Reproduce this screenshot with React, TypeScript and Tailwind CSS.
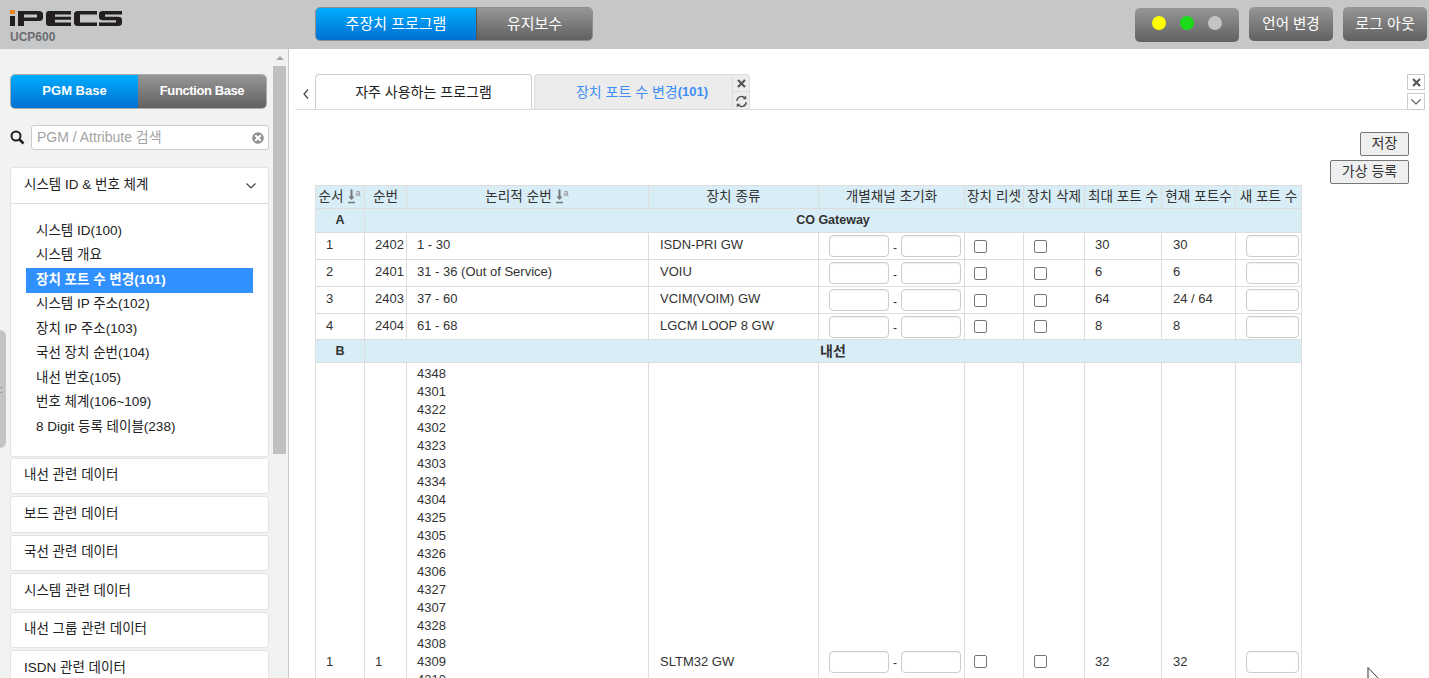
const FONT = "font-['Liberation_Sans','Noto_Sans_CJK_KR',sans-serif]";

const menuItems = [
  "시스템 ID(100)",
  "시스템 개요",
  "장치 포트 수 변경(101)",
  "시스템 IP 주소(102)",
  "장치 IP 주소(103)",
  "국선 장치 순번(104)",
  "내선 번호(105)",
  "번호 체계(106~109)",
  "8 Digit 등록 테이블(238)",
];

const groups = [
  { label: "내선 관련 데이터", h: "h-[36px]" },
  { label: "보드 관련 데이터", h: "h-[37px]" },
  { label: "국선 관련 데이터", h: "h-[36px]" },
  { label: "시스템 관련 데이터", h: "h-[37px]" },
  { label: "내선 그룹 관련 데이터", h: "h-[36px]" },
  { label: "ISDN 관련 데이터", h: "h-[37px]" },
];

const gatewayRows = [
  { no: "1", seq: "2402", logical: "1 - 30", type: "ISDN-PRI GW", max: "30", cur: "30", h: "h-[27px]" },
  { no: "2", seq: "2401", logical: "31 - 36 (Out of Service)", type: "VOIU", max: "6", cur: "6", h: "h-[27px]" },
  { no: "3", seq: "2403", logical: "37 - 60", type: "VCIM(VOIM) GW", max: "64", cur: "24 / 64", h: "h-[27px]" },
  { no: "4", seq: "2404", logical: "61 - 68", type: "LGCM LOOP 8 GW", max: "8", cur: "8", h: "h-[26px]" },
];

const extensions = [
  "4348", "4301", "4322", "4302", "4323", "4303", "4334", "4304", "4325",
  "4305", "4326", "4306", "4327", "4307", "4328", "4308", "4309", "4310",
];

const td = "border border-[#dddddd] p-0 text-[13px] text-[#333333] align-middle";
const th = "border border-[#dddddd] p-0 text-[13.6px] font-normal text-[#333333] bg-[#d9edf7] text-center whitespace-nowrap";
const groupTh = "border border-[#dddddd] p-0 text-[12.5px] font-bold text-[#333333] bg-[#d9edf7] text-center";
const inputBox = "h-[22px] rounded-[4px] border border-[#cccccc] bg-white shadow-[inset_0_1px_1px_rgba(0,0,0,0.05)] box-border";
const gradBlue = "bg-gradient-to-b from-[#00adff] to-[#0070d0]";
const gradGray = "bg-gradient-to-b from-[#979797] to-[#616161]";

function SortIcon() {
  return (
    <svg width="14" height="15" viewBox="0 0 14 15" className="inline-block ml-[4px] align-[-3px]">
      <path d="M3.500 0.500v9" stroke="#777" strokeWidth="2" />
      <path d="M0.500 7.500l3 3.500 3-3.500z" fill="#777" />
      <path d="M0 13.500h7" stroke="#777" strokeWidth="1.500" />
      <text x="7.500" y="6.500" fontSize="9" fill="#888" fontFamily="Liberation Sans">a</text>
    </svg>
  );
}

function ChannelInputs() {
  return (
    <div className="flex items-center justify-start pl-[10px] gap-[4px]">
      <span className={`${inputBox} w-[60px]`} />
      <span className="text-[12px] leading-none pt-[3px]">-</span>
      <span className={`${inputBox} w-[60px]`} />
    </div>
  );
}

function Check({ inset }: { inset: string }) {
  return (
    <div className={`flex ${inset}`}>
      <span className="w-[13px] h-[13px] rounded-[2px] border border-[#767676] bg-white box-border" />
    </div>
  );
}

function Logo() {
  return (
    <svg width="112" height="17" viewBox="0 0 112 17" className="block">
      <rect x="0" y="0" width="5" height="4" fill="#f58220" />
      <rect x="0" y="6" width="5" height="10" fill="#231f20" />
      <path d="M8 1h21q4 0 4 3.500v3q0 3.500-4 3.500H14v5H8zM14 4.500v3h13v-3z" fill="#231f20" fillRule="evenodd" />
      <path d="M39 1h22v3.500H45v2.300h16v3H45v2.700h16V16H39q-3 0-3-3V4q0-3 3-3z" fill="#231f20" />
      <path d="M68 1h19v3.500H70v8h17V16H68q-4 0-4-3.500v-8Q64 1 68 1z" fill="#231f20" />
      <path d="M93 1h19v3.500H95v2.200h13q4 0 4 3.300v2.700q0 3.300-4 3.300H89v-3.500h17v-2.300H93q-4 0-4-3.200V4.200Q89 1 93 1z" fill="#231f20" />
    </svg>
  );
}

function Sidebar() {
  return (
    <aside className="relative w-[289px] shrink-0 h-full bg-[#f1f2f2] border-r border-[#c8c8c8] flex overflow-hidden">
      <div className="w-[273px] shrink-0 pl-[10px] pr-[4px] pt-[25px]">
        <div className="flex w-[257px] h-[35px] rounded-[5px] overflow-hidden border border-[#666666]/50 text-white text-[13px] font-bold">
          <div className={`w-[127px] flex items-center justify-center pb-[1px] ${gradBlue}`}>PGM Base</div>
          <div className={`flex-1 flex items-center justify-center pb-[1px] tracking-[-0.4px] ${gradGray}`}>Function Base</div>
        </div>
        <div className="flex items-center mt-[16px] h-[25px]">
          <svg width="15" height="15" viewBox="0 0 15 15" className="shrink-0">
            <circle cx="6" cy="6" r="4.500" fill="none" stroke="#222" strokeWidth="2" />
            <path d="M9.500 9.500L13.500 13.500" stroke="#222" strokeWidth="2.500" />
          </svg>
          <div className="ml-[6px] flex-1 h-[25px] rounded-[3px] border border-[#cccccc] bg-white flex items-center pl-[5px] pr-[4px] text-[14px] text-[#a3a3a3]">
            <span className="flex-1">PGM / Attribute 검색</span>
            <svg width="12" height="12" viewBox="0 0 12 12">
              <circle cx="6" cy="6" r="5.800" fill="#8f8f8f" />
              <path d="M3.200 3.200l5.600 5.600M8.800 3.200l-5.600 5.600" stroke="#fff" strokeWidth="2" />
            </svg>
          </div>
        </div>
        <div className="mt-[17px] rounded-[3px] border border-[#e3e3e3] bg-white">
          <div className="h-[36px] flex items-center justify-between pl-[13px] pr-[12px] border-b border-[#dddddd] text-[13.500px] text-[#222222]">
            <span>시스템 ID &amp; 번호 체계</span>
            <svg width="10" height="6" viewBox="0 0 10 6">
              <path d="M0.500 0.500L5 5l4.500-4.500" fill="none" stroke="#444" strokeWidth="1.200" />
            </svg>
          </div>
          <ul className="pt-[15px] pb-[16px] px-[15px]">
            {menuItems.map((m, i) => (
              <li
                key={m}
                className={
                  i === 2
                    ? "h-[24.500px] flex items-center pl-[10px] bg-[#3090ff] text-white font-bold text-[13.500px]"
                    : "h-[24.500px] flex items-center pl-[10px] pb-[1px] text-[#222222] text-[13.500px]"
                }
              >
                {m}
              </li>
            ))}
          </ul>
        </div>
        <div className="mt-[1px] flex flex-col gap-[2px]">
          {groups.map((g) => (
            <div
              key={g.label}
              className={`${g.h} shrink-0 flex items-center pl-[13px] rounded-[3px] border border-[#e3e3e3] bg-white text-[13.500px] text-[#222222]`}
            >
              {g.label}
            </div>
          ))}
        </div>
      </div>
      {/* scrollbar */}
      <div className="w-[13px] shrink-0 flex flex-col items-center">
        <div className="h-[17px] flex items-center justify-center">
          <svg width="8" height="4" viewBox="0 0 8 4">
            <path d="M0 4l4-4 4 4z" fill="#a3a3a3" />
          </svg>
        </div>
        <div className="w-[13px] h-[388px] bg-[#c0c0c0]" />
      </div>
      {/* collapse handle */}
      <div className="absolute left-0 top-[281px] w-[6px] h-[118px] rounded-r-[6px] bg-[#c4c4c4]" />
      <span className="absolute left-0 top-[336px] text-[#666666] text-[10px] leading-none">:</span>
    </aside>
  );
}

function Tabs() {
  return (
    <div className="relative h-[61px] pt-[25px] mx-[6px] border-b border-[#dcdcdc] flex items-stretch">
      <div className="w-[20px] flex items-center justify-center pt-[4px] pl-[2px]">
        <svg width="6" height="10" viewBox="0 0 6 10">
          <path d="M5 0.500L1 5l4 4.500" fill="none" stroke="#444" strokeWidth="1.200" />
        </svg>
      </div>
      <div className="w-[217px] rounded-t-[4px] border border-b-0 border-[#cccccc] bg-white flex items-center justify-center text-[14px] text-[#222222]">
        자주 사용하는 프로그램
      </div>
      <div className="ml-[2px] w-[216px] flex rounded-t-[4px] border border-b-0 border-[#dddddd] bg-[#ececec]">
        <div className="flex-1 flex items-center justify-center pl-[17px] text-[13px] font-bold text-[#3e8ef7]">
          <span className="font-normal text-[14px]">장치 포트 수 변경</span>(101)
        </div>
        <div className="w-[17px] flex flex-col border-l border-[#dddddd]">
          <div className="h-[17px] flex items-center justify-center border-b border-[#dddddd]">
            <svg width="9" height="9" viewBox="0 0 9 9">
              <path d="M1 1l7 7M8 1l-7 7" stroke="#555" strokeWidth="2.200" />
            </svg>
          </div>
          <div className="flex-1 flex items-center justify-center pt-[1px]">
            <svg width="13" height="13" viewBox="0 0 11 11" fill="none" stroke="#555" strokeWidth="1.200">
              <path d="M1.500 5A4 4 0 0 1 8.800 3" />
              <path d="M9.500 6A4 4 0 0 1 2.200 8" />
              <path d="M9.500 0.500v3h-3z" fill="#555" stroke="none" />
              <path d="M1.500 10.500v-3h3z" fill="#555" stroke="none" />
            </svg>
          </div>
        </div>
      </div>
      <div className="absolute right-[-2px] top-[25px] flex flex-col gap-[3px]">
        <div className="w-[18px] h-[16px] border border-[#cccccc] bg-white flex items-center justify-center">
          <svg width="9" height="9" viewBox="0 0 9 9">
            <path d="M1 1l7 7M8 1l-7 7" stroke="#555" strokeWidth="2.200" />
          </svg>
        </div>
        <div className="w-[18px] h-[17px] border border-[#cccccc] bg-white flex items-center justify-center">
          <svg width="10" height="6" viewBox="0 0 10 6">
            <path d="M0.500 0.500L5 5l4.500-4.500" fill="none" stroke="#555" strokeWidth="1.100" />
          </svg>
        </div>
      </div>
    </div>
  );
}

function PortTable() {
  return (
    <table className="table-fixed border-collapse w-[986px] ml-[26px] mt-[1px]">
      <colgroup>
        <col className="w-[49px]" />
        <col className="w-[42px]" />
        <col className="w-[242px]" />
        <col className="w-[170px]" />
        <col className="w-[146px]" />
        <col className="w-[59px]" />
        <col className="w-[61px]" />
        <col className="w-[77px]" />
        <col className="w-[74px]" />
        <col className="w-[66px]" />
      </colgroup>
      <thead>
        <tr className="h-[23px]">
          <th className={th}>순서<SortIcon /></th>
          <th className={th}>순번</th>
          <th className={th}>논리적 순번<SortIcon /></th>
          <th className={th}>장치 종류</th>
          <th className={th}>개별채널 초기화</th>
          <th className={th}>장치 리셋</th>
          <th className={th}>장치 삭제</th>
          <th className={th}>최대 포트 수</th>
          <th className={th}>현재 포트수</th>
          <th className={th}>새 포트 수</th>
        </tr>
      </thead>
      <tbody>
        <tr className="h-[24px]">
          <th className={`${groupTh} pb-[1px]`}>A</th>
          <th className={`${groupTh} pb-[1px]`} colSpan={9}>CO Gateway</th>
        </tr>
        {gatewayRows.map((r) => (
          <tr key={r.seq} className={r.h}>
            <td className={`${td} pl-[10px] pb-[2px]`}>{r.no}</td>
            <td className={`${td} pl-[10px] pb-[2px]`}>{r.seq}</td>
            <td className={`${td} pl-[10px] pb-[2px]`}>{r.logical}</td>
            <td className={`${td} pl-[11px] pb-[2px]`}>{r.type}</td>
            <td className={td}><ChannelInputs /></td>
            <td className={td}><Check inset="pl-[9px]" /></td>
            <td className={td}><Check inset="pl-[10px]" /></td>
            <td className={`${td} pl-[10px] pb-[2px]`}>{r.max}</td>
            <td className={`${td} pl-[11px] pb-[2px]`}>{r.cur}</td>
            <td className={td}>
              <div className="flex justify-end pr-[2px]"><span className={`${inputBox} w-[53px]`} /></div>
            </td>
          </tr>
        ))}
        <tr className="h-[23px]">
          <th className={groupTh}>B</th>
          <th className={`${groupTh} !text-[14px]`} colSpan={9}>내선</th>
        </tr>
        <tr className="h-[598px]">
          <td className={`${td} pl-[10px]`}>1</td>
          <td className={`${td} pl-[10px]`}>1</td>
          <td className={`${td} pl-[10px] pt-[2px] !align-top`}>
            {extensions.map((n) => (
              <div key={n} className="h-[18px] leading-[18px]">{n}</div>
            ))}
          </td>
          <td className={`${td} pl-[11px]`}>SLTM32 GW</td>
          <td className={td}><ChannelInputs /></td>
          <td className={td}><Check inset="pl-[9px]" /></td>
          <td className={td}><Check inset="pl-[10px]" /></td>
          <td className={`${td} pl-[10px]`}>32</td>
          <td className={`${td} pl-[11px]`}>32</td>
          <td className={td}>
            <div className="flex justify-end pr-[2px]"><span className={`${inputBox} w-[53px]`} /></div>
          </td>
        </tr>
      </tbody>
    </table>
  );
}

export default function App() {
  return (
    <div className={`${FONT} relative w-[1429px] h-[678px] overflow-hidden flex flex-col bg-white`}>
      <header className="h-[49px] shrink-0 bg-[#c6c7c9] flex items-start">
        <div className="w-[315px] shrink-0 pl-[10px] pt-[10px]">
          <Logo />
          <div className="text-[12px] leading-[12px] font-bold text-[#6d6e71] mt-[4px]">UCP600</div>
        </div>
        <div className="mt-[7px] flex h-[34px] rounded-[5px] overflow-hidden border border-[#666666]/60 text-white text-[15px] w-[278px]">
          <div className={`w-[161px] flex items-center justify-center ${gradBlue} border-r border-[#555555]`}>주장치 프로그램</div>
          <div className={`flex-1 flex items-center justify-center ${gradGray}`}>유지보수</div>
        </div>
        <div className="ml-auto pr-[2px] pt-[7px] flex items-start gap-[10px]">
          <div className={`w-[104px] h-[34px] mt-[1px] rounded-[5px] ${gradGray} flex items-center gap-[14px] pl-[17px] pb-[4px]`}>
            <span className="w-[14px] h-[14px] rounded-full bg-[#ffff00]" />
            <span className="w-[14px] h-[14px] rounded-full bg-[#1bdc1b]" />
            <span className="w-[14px] h-[14px] rounded-full bg-[#c4c4c4]" />
          </div>
          <div className={`w-[84px] h-[34px] pt-[1px] rounded-[5px] ${gradGray} flex items-center justify-center text-white text-[14.500px]`}>언어 변경</div>
          <div className={`w-[84px] h-[34px] rounded-[5px] ${gradGray} flex items-center justify-center text-white text-[15px]`}>로그 아웃</div>
        </div>
      </header>
      <div className="flex flex-1 min-h-0">
        <Sidebar />
        <main className="flex-1 min-w-0 overflow-hidden">
          <Tabs />
          <div className="flex flex-col items-end pr-[20px] pt-[22px] gap-[4px]">
            <button className="w-[49px] h-[24px] rounded-[2px] border border-[#767676] bg-[#efefef] text-[14px] text-[#333333] leading-none pb-[2px]">저장</button>
            <button className="w-[79px] h-[24px] rounded-[2px] border border-[#767676] bg-[#efefef] text-[14px] text-[#333333] leading-none pb-[2px]">가상 등록</button>
          </div>
          <PortTable />
        </main>
      </div>
      {/* mouse cursor in the capture */}
      <svg width="14" height="12" viewBox="0 0 14 12" className="absolute left-[1367px] top-[667px]">
        <path d="M1 0.500V11M1 0.500L11 11" fill="none" stroke="#333" strokeWidth="1" />
      </svg>
    </div>
  );
}
